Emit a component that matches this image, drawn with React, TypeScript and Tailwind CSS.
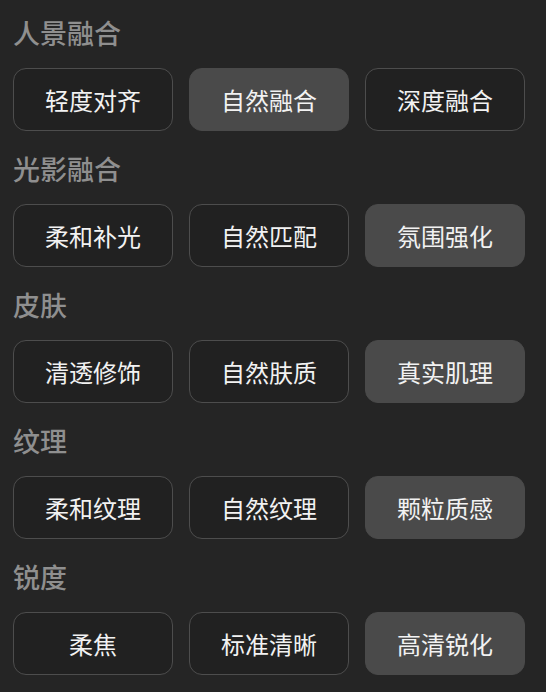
type Group = {
  title: string;
  options: string[];
  active: number;
};

const groups: Group[] = [
  { title: "人景融合", options: ["轻度对齐", "自然融合", "深度融合"], active: 1 },
  { title: "光影融合", options: ["柔和补光", "自然匹配", "氛围强化"], active: 2 },
  { title: "皮肤", options: ["清透修饰", "自然肤质", "真实肌理"], active: 2 },
  { title: "纹理", options: ["柔和纹理", "自然纹理", "颗粒质感"], active: 2 },
  { title: "锐度", options: ["柔焦", "标准清晰", "高清锐化"], active: 2 },
];

export default function App() {
  return (
    <div
      className="min-h-[692px] w-[546px] bg-[#252525] pt-[15px] pl-[13px] pr-[21px]"
      style={{ fontFamily: '"Noto Sans CJK SC", "Noto Sans", sans-serif' }}
    >
      {groups.map((g, gi) => (
        <section key={g.title} className={gi > 0 ? "mt-[20px]" : ""}>
          <h2 className="h-[36px] text-[27px] leading-[36px] font-medium text-[#8f8f8f]">{g.title}</h2>
          <div className="mt-[17px] grid grid-cols-3 gap-4">
            {g.options.map((opt, i) => (
              <button
                key={opt}
                className={
                  i === g.active
                    ? "h-[63px] rounded-[13px] border border-[#4a4a4a] bg-[#4a4a4a] text-[24px] text-[#f2f2f2]"
                    : "h-[63px] rounded-[13px] border border-[#4d4d4d] bg-[#212121] text-[24px] text-[#f2f2f2]"
                }
              >
                {opt}
              </button>
            ))}
          </div>
        </section>
      ))}
    </div>
  );
}
